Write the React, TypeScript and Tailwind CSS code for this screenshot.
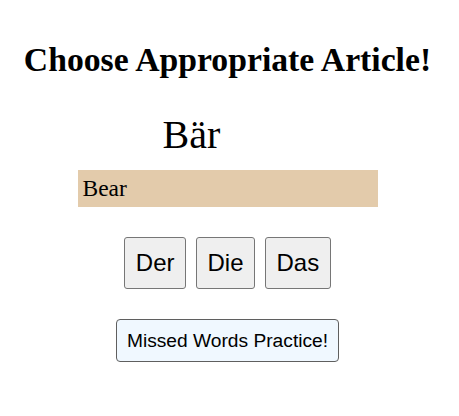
export default function App() {
  const articles = ["Der", "Die", "Das"];
  return (
    <div className="flex w-[455px] flex-col items-center bg-white pt-[41px] text-black">
      <h1 className="text-[33.7px] font-bold leading-[38px] [font-family:'Liberation_Serif',serif]">
        Choose Appropriate Article!
      </h1>
      <div className="mt-[33px] pr-[72px] text-[40px] leading-[46px] [font-family:'Liberation_Serif',serif]">
        Bär
      </div>
      <div className="mt-[12px] h-[37px] w-[300px] bg-[#e3cbab] pl-[5px] text-[23.5px] leading-[37px] [font-family:'Liberation_Serif',serif]">
        Bear
      </div>
      <div className="mt-[30px] flex gap-[10px] [font-family:'Liberation_Sans',Arial,sans-serif]">
        {articles.map((a) => (
          <button
            key={a}
            className="h-[52px] rounded-[3px] border border-[#767676] bg-[#efefef] px-[10.5px] text-[24px] leading-[28px]"
          >
            {a}
          </button>
        ))}
      </div>
      <button className="mt-[30px] h-[43px] rounded-[4px] border border-[#5f5f5f] bg-[#f0f8ff] px-[10px] text-[19.2px] leading-[22px] [font-family:'Liberation_Sans',Arial,sans-serif]">
        Missed Words Practice!
      </button>
    </div>
  );
}
